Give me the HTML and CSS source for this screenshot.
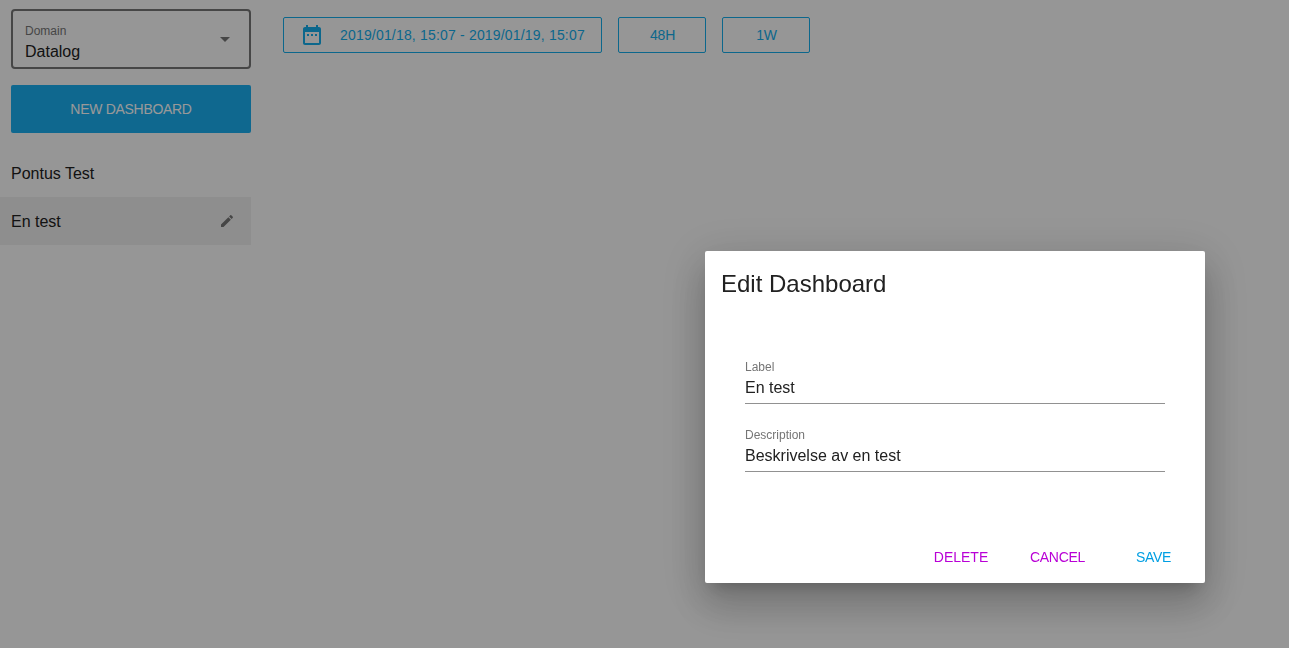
FILE: index.html
```html
<!DOCTYPE html>
<html lang="en">
<head>
<meta charset="utf-8">
<title>Dashboards</title>
<link rel="stylesheet" href="styles.css">
</head>
<body>
<div class="app">
  <aside class="sidebar">
    <div class="select">
      <div class="select-text">
        <span class="select-label">Domain</span>
        <span class="select-value">Datalog</span>
      </div>
      <svg class="icon" viewBox="0 0 24 24"><path d="M7 10l5 5 5-5z"/></svg>
    </div>
    <button class="btn btn-raised">NEW DASHBOARD</button>
    <ul class="list">
      <li class="list-item">Pontus Test</li>
      <li class="list-item active">En test
        <svg class="icon icon-edit" viewBox="0 0 24 24"><path d="M3 17.25V21h3.75L17.81 9.94l-3.75-3.75L3 17.25zM20.71 7.04c.39-.39.39-1.02 0-1.41l-2.34-2.34c-.39-.39-1.02-.39-1.41 0l-1.83 1.83 3.75 3.75 1.83-1.83z"/></svg>
      </li>
    </ul>
  </aside>
  <main class="toolbar">
    <button class="btn btn-outline btn-date">
      <svg class="icon icon-date" viewBox="0 0 24 24"><path d="M9 11H7v2h2v-2zm4 0h-2v2h2v-2zm4 0h-2v2h2v-2zm2-7h-1V2h-2v2H8V2H6v2H5c-1.11 0-1.99.9-1.99 2L3 20c0 1.1.89 2 2 2h14c1.1 0 2-.9 2-2V6c0-1.1-.9-2-2-2zm0 16H5V9h14v11z"/></svg>
      <span class="date-text">2019/01/18, 15:07 - 2019/01/19, 15:07</span>
    </button>
    <button class="btn btn-outline">48H</button>
    <button class="btn btn-outline">1W</button>
  </main>
</div>
<div class="scrim">
  <section class="dialog">
    <h2 class="dialog-title">Edit Dashboard</h2>
    <div class="dialog-content">
      <div class="field"><span class="field-label">Label</span><span class="field-value">En test</span></div>
      <div class="field"><span class="field-label">Description</span><span class="field-value">Beskrivelse av en test</span></div>
    </div>
    <footer class="dialog-footer">
      <button class="btn btn-flat secondary">DELETE</button>
      <button class="btn btn-flat btn-tight secondary">CANCEL</button>
      <button class="btn btn-flat btn-tight primary">SAVE</button>
    </footer>
  </section>
</div>
</body>
</html>
```
FILE: styles.css
```css
* { box-sizing: border-box; }
body {
  margin: 0;
  height: 648px;
  overflow: hidden;
  background: #fafafa;
  color: #212121;
  font-family: "Liberation Sans", Arial, sans-serif;
  font-size: 16px;
}
.app { display: flex; height: 648px; }
.sidebar { width: 251px; padding-top: 9px; display: flex; flex-direction: column; }
.icon { width: 24px; height: 24px; fill: #757575; flex: none; }
.select {
  height: 60px;
  margin-left: 11px;
  padding: 0 12px;
  border: 2px solid #757575;
  border-radius: 4px;
  display: flex;
  align-items: center;
  justify-content: space-between;
}
.select-text { display: flex; flex-direction: column; padding-top: 9px; }
.select-label { font-size: 12px; line-height: 16px; color: #757575; }
.select-value { line-height: 25px; }
.btn {
  border: 0;
  border-radius: 2px;
  background: transparent;
  font: 14px "Liberation Sans", Arial, sans-serif;
  padding: 0;
  white-space: nowrap;
}
.btn-raised { height: 48px; margin: 16px 0 0 11px; background: #19adee; color: #fff; letter-spacing: -.3px; }
.list { margin: 16px 0 0; padding: 0; list-style: none; }
.list-item {
  height: 48px;
  padding: 0 12px 0 11px;
  display: flex;
  justify-content: space-between;
  line-height: 50px;
}
.active { background: #ededed; }
.icon-edit { width: 16px; height: 16px; margin: 16px 4px 0 0; }
.toolbar { display: flex; align-items: flex-start; gap: 16px; padding: 17px 0 0 32px; }
.btn-outline { width: 88px; height: 36px; border: 1px solid #14ace9; color: #14ace9; letter-spacing: -.2px; padding-left: 1px; }
.btn-date { width: 319px; display: flex; align-items: center; padding-left: 16px; gap: 16px; letter-spacing: .18px; }
.icon-date { fill: #14ace9; }
.scrim {
  position: fixed;
  inset: 0;
  background: rgba(0, 0, 0, .4);
  display: flex;
  align-items: flex-end;
  justify-content: flex-end;
  padding: 0 84px 65px 0;
}
.dialog {
  width: 500px;
  height: 332px;
  background: #fff;
  border-radius: 2px;
  box-shadow: 0 11px 15px -7px rgba(0, 0, 0, .2), 0 24px 38px 3px rgba(0, 0, 0, .14), 0 9px 46px 8px rgba(0, 0, 0, .12);
  display: flex;
  flex-direction: column;
}
.dialog-title { margin: 0; padding: 16px 16px 0; font-size: 24px; font-weight: 400; line-height: 34px; }
.dialog-content { padding: 35px 40px 0; flex: 1; }
.field {
  height: 68px;
  padding-top: 23px;
  border-bottom: 1px solid #919191;
  display: flex;
  flex-direction: column;
}
.field-label { font-size: 12px; line-height: 16px; color: #757575; }
.field-value { line-height: 26px; }
.dialog-footer { display: flex; justify-content: flex-end; gap: 8px; padding: 0 8px 8px; }
.btn-flat { height: 36px; min-width: 88px; }
.btn-tight { letter-spacing: -.3px; padding-left: 1px; }
.primary { color: #009fe3; }
.secondary { color: #b900d6; }
```
